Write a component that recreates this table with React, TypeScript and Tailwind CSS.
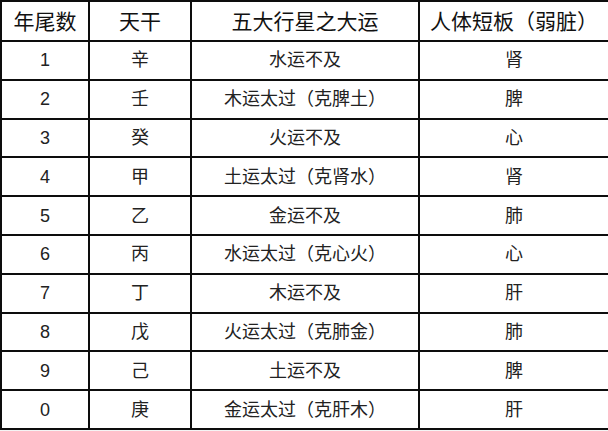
const rows: [string, string, string, string][] = [
  ["1", "辛", "水运不及", "肾"],
  ["2", "壬", "木运太过（克脾土）", "脾"],
  ["3", "癸", "火运不及", "心"],
  ["4", "甲", "土运太过（克肾水）", "肾"],
  ["5", "乙", "金运不及", "肺"],
  ["6", "丙", "水运太过（克心火）", "心"],
  ["7", "丁", "木运不及", "肝"],
  ["8", "戊", "火运太过（克肺金）", "肺"],
  ["9", "己", "土运不及", "脾"],
  ["0", "庚", "金运太过（克肝木）", "肝"],
];

const headers = ["年尾数", "天干", "五大行星之大运", "人体短板（弱脏）"];

export default function App() {
  return (
    <div className="h-[431px] w-[608px] overflow-hidden bg-[#f4f4f4] font-['Liberation_Sans','Noto_Sans_CJK_SC',sans-serif]">
      <table className="w-[608px] table-fixed border-collapse bg-white">
        <colgroup>
          <col className="w-[88px]" />
          <col className="w-[102px]" />
          <col className="w-[228px]" />
          <col className="w-[190px]" />
        </colgroup>
        <thead>
          <tr className="h-[40px]">
            {headers.map((h) => (
              <th
                key={h}
                className="border-[2.5px] border-[#0d0d0d] p-0 text-center text-[21px] font-normal leading-none text-[#111]"
              >
                {h}
              </th>
            ))}
          </tr>
        </thead>
        <tbody>
          {rows.map((r) => (
            <tr key={r[0]} className="h-[38.8px]">
              {r.map((c, i) => (
                <td
                  key={i}
                  className="border-[2.5px] border-[#0d0d0d] p-0 text-center text-[18px] leading-none text-[#222]"
                >
                  {c}
                </td>
              ))}
            </tr>
          ))}
        </tbody>
      </table>
    </div>
  );
}
